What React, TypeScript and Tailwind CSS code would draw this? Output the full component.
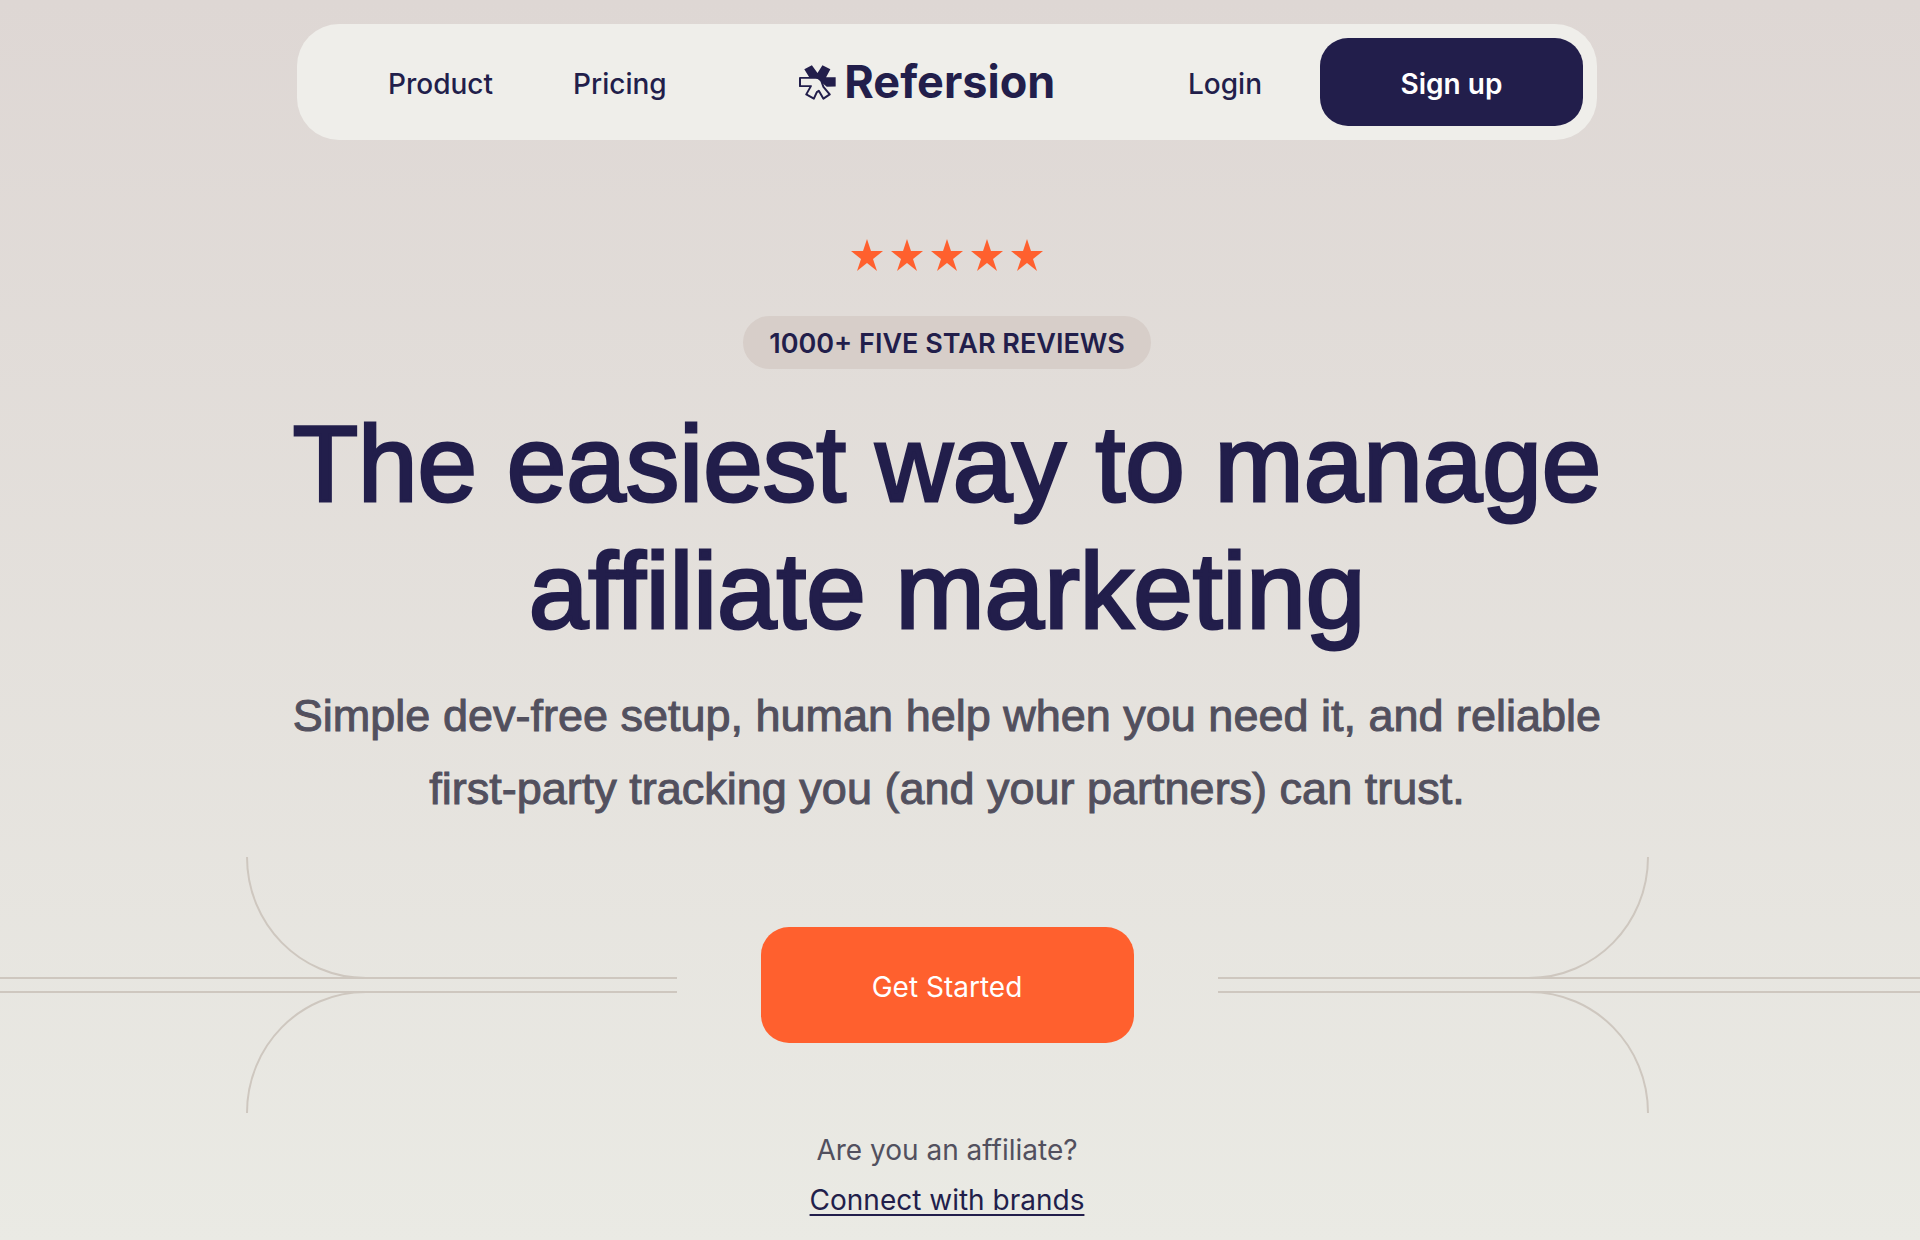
const STARS = [0, 1, 2, 3, 4];

function LogoMark() {
  return (
    <svg viewBox="0 0 112 106" className="h-[35px] w-[37px] shrink-0" aria-hidden="true">
      <path
        d="M16 13 39 1 56 24 71 1 95 13 82 37 111 37 111 65 84 66 58 44 18 42 31 37Z"
        fill="#221e4b"
      />
      <path
        d="M3 39H50C62 39 68 46 71 58L74 66 93 89 74 102 60 78 54 82 45 102 22 89 36 64 3 64Z"
        fill="#efeeea"
        stroke="#221e4b"
        strokeWidth="6"
        strokeLinejoin="round"
      />
    </svg>
  );
}

function Branch({ className }: { className: string }) {
  return (
    <svg
      viewBox="0 0 431 256"
      className={className}
      fill="none"
      stroke="#cec7bf"
      strokeWidth="2"
      aria-hidden="true"
    >
      <path d="M0 121H431M0 135H431" />
      <path d="M1 0C1 67 54 121 120 121M1 256C1 189 54 135 120 135" />
    </svg>
  );
}

export default function App() {
  return (
    <div className="min-h-screen overflow-x-hidden bg-linear-to-b from-[#ded7d4] to-[#eaeae4] pr-[26px] font-['Inter','Liberation_Sans',sans-serif] text-[28px] leading-10 text-[#221e4b]">
      <header className="pt-6">
        <nav className="mx-auto flex h-[116px] max-w-[1300px] items-center justify-between rounded-[42px] bg-[#efeeea] pr-3.5 font-medium">
          <div className="flex gap-20 pt-1 pl-[91px]">
            <a href="#product">Product</a>
            <a href="#pricing">Pricing</a>
          </div>
          <a href="#home" className="flex items-center gap-2">
            <LogoMark />
            <span className="text-[45px] font-bold">Refersion</span>
          </a>
          <div className="flex items-center justify-end gap-[58px]">
            <a href="#login" className="pt-1">
              Login
            </a>
            <a
              href="#signup"
              className="flex h-[88px] w-[263px] items-center justify-center rounded-[28px] bg-[#221e4b] pt-1 font-semibold text-white"
            >
              Sign up
            </a>
          </div>
        </nav>
      </header>

      <main className="flex flex-col items-center text-center">
        <div className="mt-[99px] flex gap-2" role="img" aria-label="Five stars">
          {STARS.map((n) => (
            <svg key={n} viewBox="0 0 32 32" className="size-8" fill="#ff602e" aria-hidden="true">
              <path d="M16 0 20 12H32L22 20 26 32 16 24 6 32 10 20 0 12H12Z" />
            </svg>
          ))}
        </div>
        <p className="mt-[45px] flex h-[53px] items-center rounded-full bg-[#d7cec9] px-[26px] pt-0.5 text-[27px] font-semibold">
          1000+ FIVE STAR REVIEWS
        </p>
        <h1 className="mt-8 font-['Liberation_Sans',sans-serif] text-[107px] leading-[127px] [-webkit-text-stroke:3px_#221e4b]">
          The easiest way to manage
          <br />
          affiliate marketing
        </h1>
        <p className="mt-6 font-['Liberation_Sans',sans-serif] text-[45px] leading-[73px] text-[#52505e] [-webkit-text-stroke:1px_#52505e]">
          Simple dev-free setup, human help when you need it, and reliable
          <br />
          first-party tracking you (and your partners) can trust.
        </p>

        <div className="mt-8 grid w-full grid-cols-[minmax(0,1fr)_541px_minmax(0,1fr)] items-center">
          <div className="flex items-center">
            <div className="h-4 flex-1 border-y-2 border-[#cec7bf]" />
            <Branch className="h-64 w-[431px] shrink-0" />
          </div>
          <a
            href="#start"
            className="mx-auto flex h-[116px] w-[373px] items-center justify-center rounded-[28px] bg-[#ff602e] pt-1 text-white"
          >
            Get Started
          </a>
          <div className="-mr-[26px] flex items-center">
            <Branch className="h-64 w-[431px] shrink-0 -scale-x-100" />
            <div className="h-4 flex-1 border-y-2 border-[#cec7bf]" />
          </div>
        </div>

        <p className="mt-3 leading-[50px] text-[#52505e]">Are you an affiliate?</p>
        <a href="#brands" className="leading-[50px] underline decoration-2 underline-offset-4">
          Connect with brands
        </a>
      </main>
    </div>
  );
}
